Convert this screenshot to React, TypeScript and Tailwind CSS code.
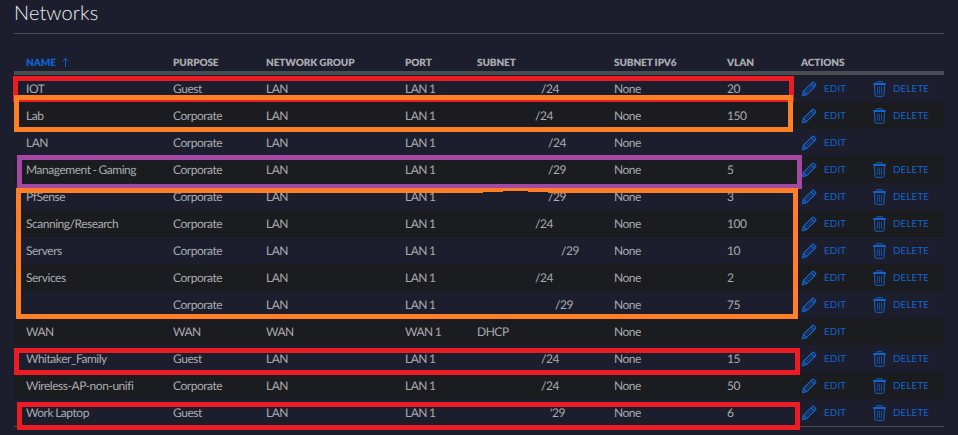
type Network = {
  name: string;
  purpose: string;
  group: string;
  port: string;
  subnet: string;
  indent: string;
  vlan: string;
  removable: boolean;
};

const corp = (name: string, subnet: string, indent: string, vlan: string, removable = true): Network => ({
  name, purpose: "Corporate", group: "LAN", port: "LAN 1", subnet, indent, vlan, removable,
});

const guest = (name: string, subnet: string, indent: string, vlan: string): Network => ({
  name, purpose: "Guest", group: "LAN", port: "LAN 1", subnet, indent, vlan, removable: true,
});

const networks: Network[] = [
  guest("IOT", "/24", "pl-[64px]", "20"),
  corp("Lab", "/24", "pl-[58px]", "150"),
  corp("LAN", "/24", "pl-[71px]", "", false),
  corp("Management - Gaming", "/29", "pl-[71px]", "5"),
  corp("PfSense", "/29", "pl-[71px]", "3"),
  corp("Scanning/Research", "/24", "pl-[58px]", "100"),
  corp("Servers", "/29", "pl-[84px]", "10"),
  corp("Services", "/24", "pl-[58px]", "2"),
  corp("", "/29", "pl-[78px]", "75"),
  { name: "WAN", purpose: "WAN", group: "WAN", port: "WAN 1", subnet: "DHCP", indent: "pl-0", vlan: "", removable: false },
  guest("Whitaker_Family", "/24", "pl-[64px]", "15"),
  corp("Wireless-AP-non-unifi", "/24", "pl-[64px]", "50"),
  guest("Work Laptop", "'29", "pl-[73px]", "6"),
];

const columns = "grid grid-cols-[147px_93px_139px_72px_137px_113px_74px_1fr] pl-3";

const outlines = [
  "left-[13px] top-[76px] w-[781px] h-[26px] border-[#ec1c24]",
  "left-[14px] top-[95px] w-[779px] h-[37px] border-[#ff7f27]",
  "left-[17px] top-[155px] w-[785px] h-[34px] border-[#a349a4]",
  "left-[16px] top-[188px] w-[782px] h-[131px] border-[#ff7f27]",
  "left-[14px] top-[348px] w-[786px] h-[27px] border-[#ec1c24]",
  "left-[17px] top-[402px] w-[783px] h-[28px] border-[#ec1c24]",
];

function Pencil() {
  return (
    <svg className="h-4 w-4 shrink-0" viewBox="0 0 16 16" fill="none" stroke="currentColor" strokeWidth="1.3">
      <path d="M1.4 14.6l1-4.1L11.3 1.6q.8-.8 1.6 0l1.5 1.5q.8.8 0 1.6L5.5 13.6z" strokeLinejoin="round" />
      <path d="M2.4 10.5l3.1 3.1M10.2 2.7l3.1 3.1" />
      <path d="M4.4 11.6l6.8-6.8" strokeWidth=".8" />
    </svg>
  );
}

function Trash() {
  return (
    <svg className="h-4 w-[13px] shrink-0" viewBox="0 0 13 16" fill="none" stroke="currentColor" strokeWidth="1">
      <path d="M.5 3.5v-1h12v1zM3.5 2.5v-1q0-.8.8-.8h4.4q.8 0 .8.8v1M1.5 3.5l.5 10.6q.1 1.2 1.2 1.2h6.6q1.1 0 1.2-1.2l.5-10.6" />
      <path d="M4.5 5.5v7.5M6.5 5.5v7.5M8.5 5.5v7.5" opacity=".7" />
    </svg>
  );
}

export default function App() {
  return (
    <main className="relative h-[435px] w-[958px] overflow-hidden bg-[#1c1e2d] px-[14px] font-['Lato',sans-serif] text-[12px] text-[#a9abb0] [text-rendering:geometricPrecision]">
      <h1 className="h-[33px] text-[20px] leading-[26px] font-light tracking-[0.1px] text-[#f0f1f4]">Networks</h1>
      <div className="w-[930px] border-t border-[#4a4d54]" />
      <section className="mt-[17px] w-[930px]">
        <div className={`${columns} h-6 border-b-4 border-[#484d52] text-[10px] leading-[24px] font-extrabold tracking-[-0.1px]`}>
          <div className="flex items-center gap-[6px] text-[#0c62d4]">
            NAME
            <svg className="h-[10px] w-[7px]" viewBox="0 0 7 10" fill="none" stroke="currentColor">
              <path d="M3.5 9V.5M.7 3.3L3.5.4l2.8 2.9" />
            </svg>
          </div>
          <span>PURPOSE</span>
          <span>NETWORK GROUP</span>
          <span>PORT</span>
          <span>SUBNET</span>
          <span>SUBNET IPV6</span>
          <span>VLAN</span>
          <span>ACTIONS</span>
        </div>
        {networks.map((n, i) => (
          <div key={i} className={`${columns} h-[27px] leading-[27px] tracking-[-0.47px] [word-spacing:-0.6px] ${i % 2 ? "bg-[#1b1c1f]" : "bg-[#1c1e2d]"}`}>
            <span>{n.name}</span>
            <span>{n.purpose}</span>
            <span>{n.group}</span>
            <span>{n.port}</span>
            <span className={n.indent}>{n.subnet}</span>
            <span>None</span>
            <span>{n.vlan}</span>
            <div className="flex items-center text-[9.8px] tracking-[0.15px] text-[#1364cd]">
              <Pencil />
              <span className="ml-[7px] w-[49px] pt-px">EDIT</span>
              {n.removable && (
                <>
                  <Trash />
                  <span className="ml-[7px] pt-px">DELETE</span>
                </>
              )}
            </div>
          </div>
        ))}
        <div className="border-t border-[#484d52]" />
      </section>
      {outlines.map((o) => (
        <div key={o} className={`absolute border-[5px] ${o}`} />
      ))}
      <div className="absolute top-[192px] left-[483px] h-px w-[65px] bg-[#1c1e2d]" />
      <div className="absolute top-[191px] left-[503px] h-px w-[25px] bg-[#1c1e2d]" />
    </main>
  );
}
